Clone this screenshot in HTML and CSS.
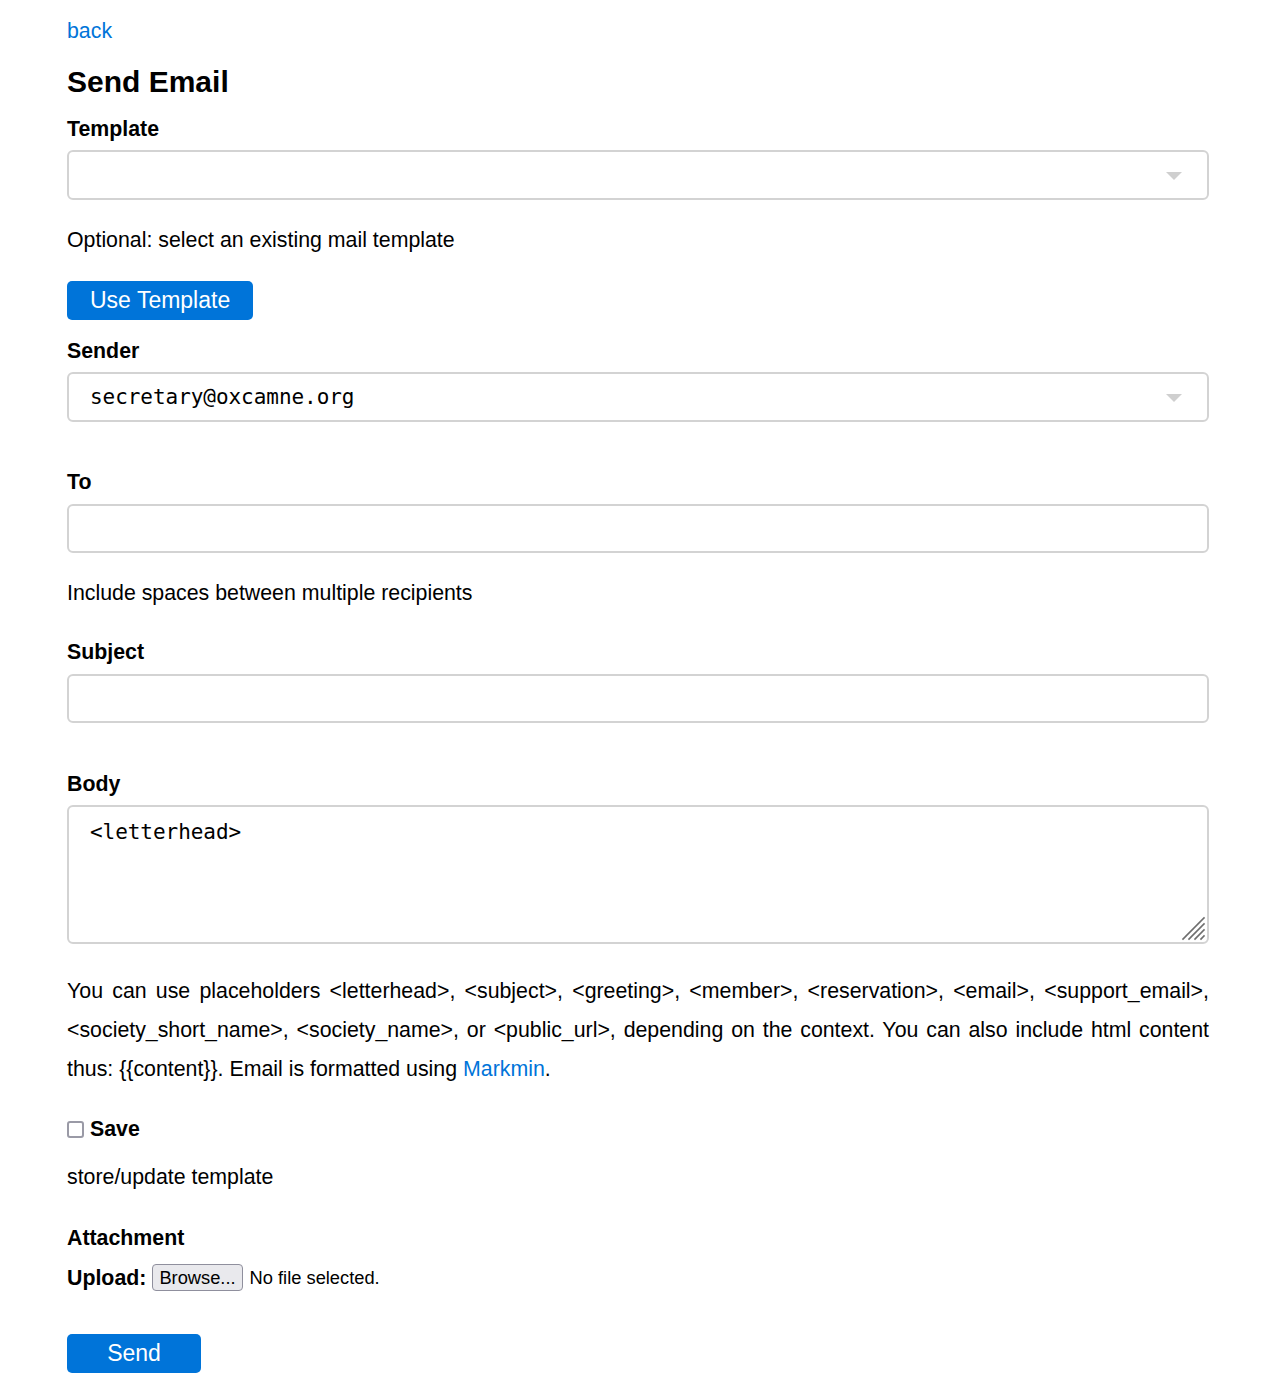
FILE: index.html
```html
<!DOCTYPE html>
<html lang="en">
<head>
<meta charset="utf-8">
<title>Send Email</title>
<link rel="stylesheet" href="styles.css">
</head>
<body>
<main class="page">
  <a class="back" href="#">back</a>
  <h1 class="title">Send Email</h1>
  <form class="form">
    <div class="field field-template">
      <label class="label">Template</label>
      <div class="select">
        <span class="select-value"></span>
        <svg class="select-arrow" width="16" height="8" viewBox="0 0 16 8"><polygon points="0,0 16,0 8,8" fill="#cfcfcf"/></svg>
      </div>
      <p class="help">Optional: select an existing mail template</p>
    </div>
    <button type="button" class="btn btn-use">Use Template</button>
    <div class="field field-sender">
      <label class="label">Sender</label>
      <div class="select">
        <span class="select-value">secretary@oxcamne.org</span>
        <svg class="select-arrow" width="16" height="8" viewBox="0 0 16 8"><polygon points="0,0 16,0 8,8" fill="#cfcfcf"/></svg>
      </div>
    </div>
    <div class="field field-to">
      <label class="label">To</label>
      <div class="input"></div>
      <p class="help">Include spaces between multiple recipients</p>
    </div>
    <div class="field field-subject">
      <label class="label">Subject</label>
      <div class="input"></div>
    </div>
    <div class="field field-body">
      <label class="label">Body</label>
      <div class="textarea-wrap">
        <div class="textarea">&lt;letterhead&gt;</div>
        <svg class="resize" width="26" height="26" viewBox="0 0 26 26">
          <g stroke="#6e6e6e" stroke-width="1.6" stroke-linecap="square">
            <line x1="24" y1="3" x2="3" y2="24"/>
            <line x1="24" y1="9" x2="9" y2="24"/>
            <line x1="24" y1="15" x2="15" y2="24"/>
            <line x1="24" y1="21" x2="21" y2="24"/>
          </g>
        </svg>
      </div>
      <p class="help help-body">You can use placeholders &lt;letterhead&gt;, &lt;subject&gt;, &lt;greeting&gt;, &lt;member&gt;, &lt;reservation&gt;, &lt;email&gt;, &lt;support_email&gt;, &lt;society_short_name&gt;, &lt;society_name&gt;, or &lt;public_url&gt;, depending on the context. You can also include html content thus: {{content}}. Email is formatted using <a href="#" class="link">Markmin</a>.</p>
    </div>
    <div class="field field-save">
      <div class="check-row">
        <span class="checkbox"></span>
        <span class="label-inline">Save</span>
      </div>
      <p class="help help-save">store/update template</p>
    </div>
    <div class="field field-attach">
      <label class="label">Attachment</label>
      <div class="upload-row">
        <span class="label-inline">Upload:</span>
        <button type="button" class="browse">Browse...</button>
        <span class="file-status">No file selected.</span>
      </div>
    </div>
    <button type="button" class="btn btn-send">Send</button>
  </form>
</main>
</body>
</html>
```

FILE: styles.css
```css
html, body {
  margin: 0;
  padding: 0;
  background: #ffffff;
}

body {
  font-family: "Liberation Sans", Arial, Helvetica, sans-serif;
  font-size: 21.33px;
  color: #000000;
}

.page {
  padding: 18px 68px 40px 67px;
}

.back {
  display: block;
  line-height: 26px;
  color: #0074d9;
  text-decoration: none;
  width: max-content;
}

.title {
  margin: 20px 0 0;
  font-size: 30px;
  line-height: 36px;
  font-weight: bold;
}

.form {
  display: flex;
  flex-direction: column;
  align-items: flex-start;
}

.field {
  display: flex;
  flex-direction: column;
  width: 100%;
}

.field-template { margin-top: 16px; }
.field-sender { margin-top: 18px; }
.field-to { margin-top: 47px; }
.field-subject { margin-top: 33px; }
.field-body { margin-top: 48px; }
.field-save { margin-top: 27px; }
.field-attach { margin-top: 35px; }

.label {
  display: block;
  font-weight: bold;
  line-height: 26px;
  margin-bottom: 8px;
}

.field-to .label,
.field-subject .label {
  margin-bottom: 9px;
}

.select,
.input {
  box-sizing: border-box;
  width: 100%;
  border: 2px solid #d3d3d3;
  border-radius: 6px;
  background: #ffffff;
}

.select {
  height: 50px;
  display: flex;
  align-items: center;
  justify-content: space-between;
  padding: 0 25px 0 21px;
}

.select-value {
  font-family: "DejaVu Sans Mono", "Liberation Mono", monospace;
  font-size: 21px;
  line-height: 26px;
  letter-spacing: -0.05px;
}

.select-arrow {
  display: block;
  margin-top: 1px;
}

.input {
  height: 49px;
}

.help {
  margin: 27px 0 0;
  line-height: 26px;
}

.textarea-wrap {
  position: relative;
  width: 100%;
}

.textarea {
  box-sizing: border-box;
  width: 100%;
  height: 139px;
  border: 2px solid #d3d3d3;
  border-radius: 6px;
  padding: 12px 21px;
  font-family: "DejaVu Sans Mono", "Liberation Mono", monospace;
  font-size: 21px;
  line-height: 26px;
  letter-spacing: -0.05px;
}

.resize {
  position: absolute;
  right: 3px;
  bottom: 3px;
}

.help-body {
  margin-top: 28px;
  line-height: 39px;
  text-align: justify;
}

.link {
  color: #0074d9;
  text-decoration: none;
}

.check-row,
.upload-row {
  display: flex;
  align-items: center;
  line-height: 26px;
}

.checkbox {
  box-sizing: border-box;
  width: 17px;
  height: 17px;
  border: 2px solid #9a9aa6;
  border-radius: 3px;
  margin-right: 6px;
  background: #ffffff;
}

.label-inline {
  font-weight: bold;
}

.help-save {
  margin-top: 22px;
}

.field-attach .label {
  margin-bottom: 13px;
}

.browse {
  box-sizing: border-box;
  height: 27px;
  margin: 0 7px 0 6px;
  padding: 0 6px;
  border: 1px solid #8f8f9d;
  border-radius: 4px;
  background: #e9e9ed;
  color: #000000;
  font-family: "Liberation Sans", Arial, sans-serif;
  font-size: 18.3px;
  line-height: 25px;
}

.file-status {
  font-size: 18.3px;
}

.btn {
  box-sizing: border-box;
  height: 39px;
  border: none;
  border-radius: 5px;
  background: #0074d9;
  color: #ffffff;
  font-family: "Liberation Sans", Arial, sans-serif;
  font-size: 23px;
  line-height: 39px;
  cursor: pointer;
}

.btn-use {
  margin-top: 28px;
  padding: 0 23px;
}

.btn-send {
  margin-top: 43px;
  width: 134px;
  padding: 0;
}
```
